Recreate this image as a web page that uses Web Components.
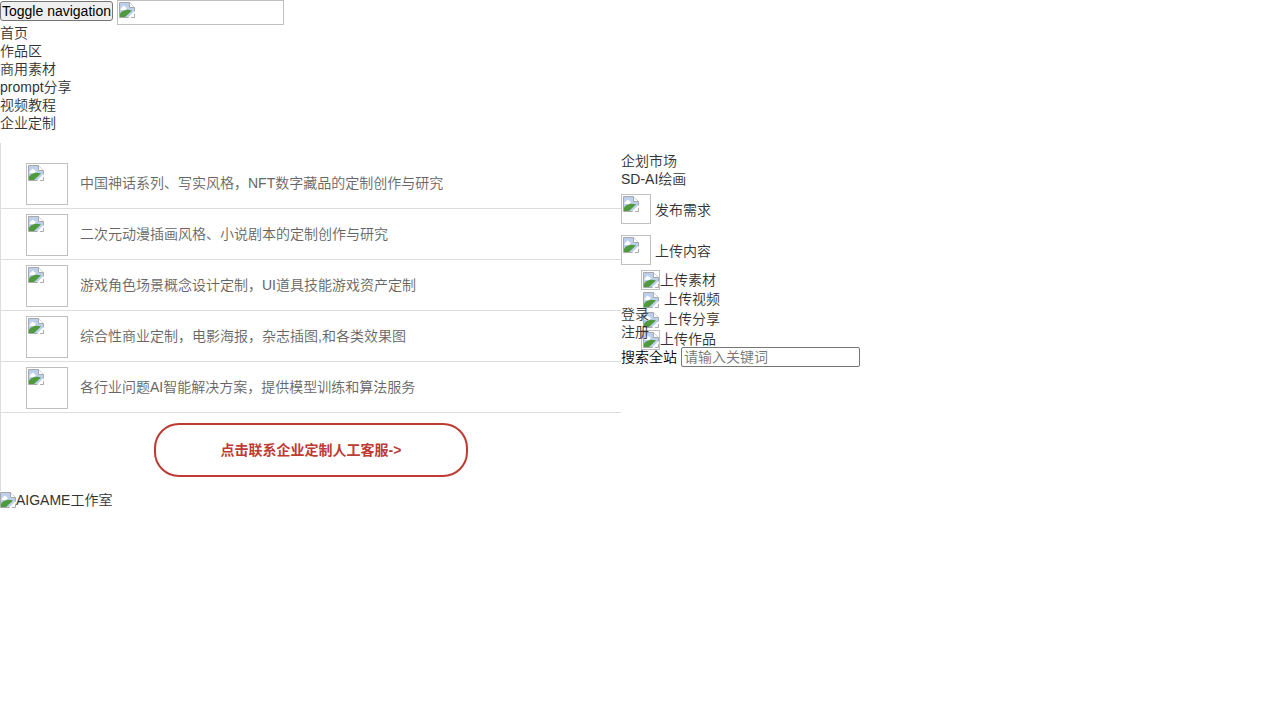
<!DOCTYPE html>
<html lang="zh-CN">
<head>
<meta charset="utf-8">
<title>AIGAME工作室</title>
<style>
html,body{margin:0;padding:0;background:#fff;}
body{font-family:"Liberation Sans","Noto Sans CJK SC",sans-serif;font-size:14px;line-height:18px;color:#333;font-weight:350;}
</style>
</head>
<body>

<site-header></site-header>
<div style="height:11px"></div>
<site-dropdown></site-dropdown>
<site-logo></site-logo>

<script>
const brokenIcon = `<svg width="16" height="16" viewBox="0 0 16 16" style="display:block">
<path d="M0.5 0.5H10.5L15.5 5.5V15.5H0.5Z" fill="#fff" stroke="#a9a9a9"/>
<path d="M1 1H10V6H15V10L10 15H1Z" fill="#bcd0ee"/>
<path d="M1 7.5L4.5 3.5L8 6L6 8.5Z" fill="#fff"/>
<path d="M1 15V11.5C4 8 8 7 13 8.5L6 15Z" fill="#4f9a3c"/>
<path d="M10.5 0.5V5.5H15.5" fill="#fff" stroke="#a9a9a9"/>
<path d="M16 10L10 16" stroke="#fff" stroke-width="2"/>
</svg>`;

class BrokenImg extends HTMLElement{
    constructor(){
        super();
        this.attachShadow({mode:'open'});
        const w=this.getAttribute('w'), h=this.getAttribute('h');
        const bare=this.hasAttribute('bare');
        this.shadowRoot.innerHTML=`<style>
:host{display:inline-block;box-sizing:border-box;width:${w}px;height:${h}px;vertical-align:bottom;overflow:hidden;flex:none;
${bare?'':'border:1px solid #c0c0c0;padding:1px;'}}
</style>${brokenIcon}`;
    }
}
customElements.define('broken-img',BrokenImg);

class SiteHeader extends HTMLElement{
    constructor(){
        super();
        this.attachShadow({mode:'open'});
        this.shadowRoot.innerHTML=`<style>
:host{display:block;}
.top{display:flex;align-items:flex-start;height:24px;}
button{box-sizing:border-box;height:20px;margin:1px 4px 0 0;padding:0 1px;font:14px/16px "Liberation Sans",sans-serif;color:#000;
background:#efefef;border:1px solid #767676;border-radius:3px;white-space:nowrap;}
nav a{display:block;height:18px;color:#333;text-decoration:none;}
</style>
<div class="top"><button>Toggle navigation</button><broken-img w="167" h="25"></broken-img></div>
<nav><a>首页</a><a>作品区</a><a>商用素材</a><a>prompt分享</a><a>视频教程</a><a>企业定制</a></nav>`;
    }
}
customElements.define('site-header',SiteHeader);

class SolutionList extends HTMLElement{
    constructor(){
        super();
        this.attachShadow({mode:'open'});
        const items=['中国神话系列、写实风格，NFT数字藏品的定制创作与研究','二次元动漫插画风格、小说剧本的定制创作与研究','游戏角色场景概念设计定制，UI道具技能游戏资产定制','综合性商业定制，电影海报，杂志插图,和各类效果图','各行业问题AI智能解决方案，提供模型训练和算法服务'];
        this.shadowRoot.innerHTML=`<style>
:host{display:block;box-sizing:border-box;width:621px;height:348px;padding-top:15px;border-left:1px solid #ddd;}
.row{display:flex;box-sizing:border-box;height:51px;align-items:center;padding:0 0 0 25px;border-bottom:1px solid #ddd;color:#666;}
.row broken-img{margin-top:2px;}
.row span{margin-left:12px;}
.cta{display:flex;justify-content:center;padding-top:10px;}
.cta a{box-sizing:border-box;display:flex;align-items:center;justify-content:center;width:314px;height:54px;border:2px solid #bd3b32;border-radius:25px;
color:#bd3b32;font-weight:bold;text-decoration:none;}
</style>
${items.map(t=>`<div class="row"><broken-img w="42" h="42"></broken-img><span>${t}</span></div>`).join('')}
<div class="cta"><a>点击联系企业定制人工客服-&gt;</a></div>`;
    }
}
customElements.define('solution-list',SolutionList);

class UploadMenu extends HTMLElement{
    constructor(){
        super();
        this.attachShadow({mode:'open'});
        const items=[['上传素材',1],['上传视频',0],['上传分享',0],['上传作品',1]];
        this.shadowRoot.innerHTML=`<style>
:host{display:block;position:absolute;left:20px;top:127px;width:120px;}
.i{display:flex;height:20px;align-items:center;color:#333;white-space:nowrap;}
.i span{margin-left:4px;margin-bottom:2px;}
.i.k span{margin-left:0;margin-bottom:0;}
.i.k:last-child span{margin-bottom:2px;}
</style>
${items.map(([t,k])=>`<div class="i${k?' k':''}"><broken-img w="19" h="20" ${k?'':'bare'} style="${k?'':'padding:2px 0 0 2px;'}"></broken-img><span>${t}</span></div>`).join('')}`;
    }
}
customElements.define('upload-menu',UploadMenu);

class SideLinks extends HTMLElement{
    constructor(){
        super();
        this.attachShadow({mode:'open'});
        this.shadowRoot.innerHTML=`<style>
:host{display:block;position:relative;width:300px;padding-top:9px;color:#333;}
a{display:block;height:18px;}
.act{display:flex;align-items:center;height:30px;margin-top:6px;}
.act+.act{margin-top:11px;}
.act span{margin-left:4px;margin-top:1px;}
.login{position:relative;margin-top:40px;}
.search{position:relative;display:flex;align-items:center;height:20px;margin-top:6px;color:#000;}
.search label{margin-right:4px;}
input{box-sizing:border-box;width:179px;height:20px;padding:1px 2px;font:350 14px "Liberation Sans","Noto Sans CJK SC",sans-serif;border:1px solid #767676;border-radius:2px;background:#fff;}
input::placeholder{color:#757575;}
</style>
<a>企划市场</a><a>SD-AI绘画</a>
<div class="act"><broken-img w="30" h="30"></broken-img><span>发布需求</span></div>
<div class="act"><broken-img w="30" h="30"></broken-img><span>上传内容</span></div>
<upload-menu></upload-menu>
<div class="login"><a>登录</a><a>注册</a></div>
<div class="search"><label>搜索全站</label><input placeholder="请输入关键词"></div>`;
    }
}
customElements.define('side-links',SideLinks);

class SiteDropdown extends HTMLElement{
    constructor(){
        super();
        this.attachShadow({mode:'open'});
        this.shadowRoot.innerHTML=`<style>:host{display:flex;align-items:flex-start;}</style>
<solution-list></solution-list><side-links></side-links>`;
    }
}
customElements.define('site-dropdown',SiteDropdown);

class SiteLogo extends HTMLElement{
    constructor(){
        super();
        this.attachShadow({mode:'open'});
        this.shadowRoot.innerHTML=`<style>
:host{display:flex;align-items:center;height:18px;color:#333;}
</style><broken-img w="16" h="16" bare></broken-img><span>AIGAME工作室</span>`;
    }
}
customElements.define('site-logo',SiteLogo);
</script>
</body>
</html>
